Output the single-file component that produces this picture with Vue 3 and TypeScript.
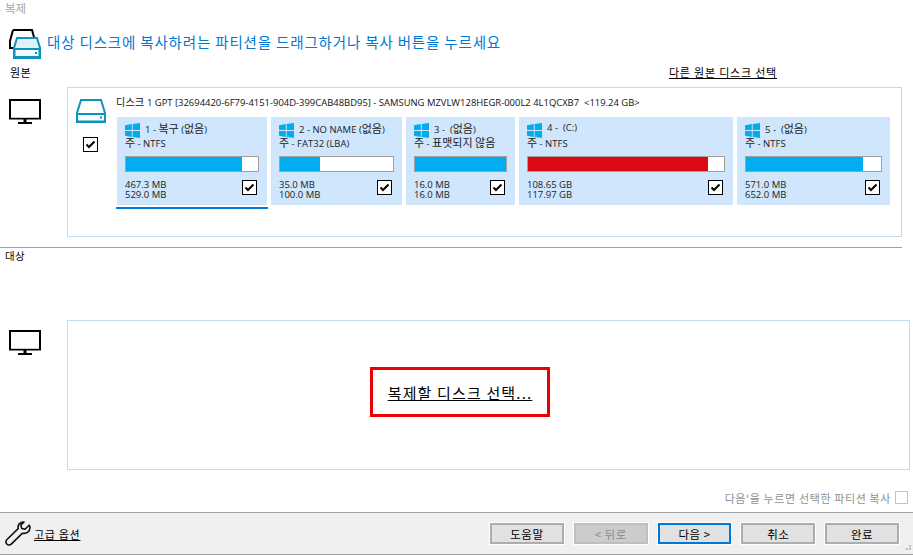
<script setup lang="ts">
interface Partition {
  name: string
  kind: string
  used: string
  total: string
  width: number
  fill: number
  color: string
  selected?: boolean
}

const partitions: Partition[] = [
  { name: '1 - 복구 (없음)', kind: '주 - NTFS', used: '467.3 MB', total: '529.0 MB', width: 150, fill: 88, color: '#00adef', selected: true },
  { name: '2 - NO NAME (없음)', kind: '주 - FAT32 (LBA)', used: '35.0 MB', total: '100.0 MB', width: 131, fill: 35, color: '#00adef' },
  { name: '3 -  (없음)', kind: '주 - 표맷되지 않음', used: '16.0 MB', total: '16.0 MB', width: 109, fill: 100, color: '#00adef' },
  { name: '4 -  (C:)', kind: '주 - NTFS', used: '108.65 GB', total: '117.97 GB', width: 214, fill: 92, color: '#dc0a14' },
  { name: '5 -  (없음)', kind: '주 - NTFS', used: '571.0 MB', total: '652.0 MB', width: 153, fill: 87, color: '#00adef' }
]
const buttons = ['도움말', '< 뒤로', '다음 >', '취소', '완료']

function segments(text: string): { t: string; ko: boolean }[] {
  return text
    .split(/([가-힣 ]*[가-힣]+)/)
    .filter((s) => s.length > 0)
    .map((t) => ({ t, ko: /[가-힣]/.test(t) }))
}
</script>

<template>
  <div class="app">
    <div class="title">복제</div>
    <div class="head">
      <svg class="head-icon" width="32" height="32" viewBox="0 0 32 32">
        <path d="M4 2H23L25.500 11M4 2L1 13V20H5" fill="none" stroke="#000" stroke-width="2" />
        <path d="M8 10H28L31 20V30H5V20Z" fill="#dff2fa" stroke="#0d93bd" stroke-width="2" />
        <path d="M5 20H31V31H5Z" fill="#0d93bd" />
        <rect x="6.500" y="22" width="23" height="6" fill="#f4fbfe" />
        <rect x="26" y="24" width="2" height="2" fill="#0d93bd" />
      </svg>
      <span class="heading">대상 디스크에 복사하려는 파티션을 드래그하거나 복사 버튼을 누르세요</span>
    </div>
    <div class="source-label">
      <span class="label">원본</span>
      <a class="link">다른 원본 디스크 선택</a>
    </div>
    <div class="row source">
      <svg class="monitor" width="32" height="25" viewBox="0 0 32 25">
        <rect x="1" y="1" width="30" height="18.500" fill="#fff" stroke="#000" stroke-width="2" />
        <path d="M2 18.500H30" stroke="#ccc" />
        <rect x="14.500" y="20" width="3" height="3" />
        <rect x="9" y="23" width="14" height="2" />
      </svg>
      <div class="box source-box">
        <div class="disk-col">
          <svg width="30" height="24" viewBox="0 0 30 24">
            <path d="M5 1H25L29 14V23H1V14Z" fill="#fff" stroke="#0d93bd" stroke-width="2" />
            <path d="M0 14H30V24H0Z" fill="#0d93bd" />
            <rect x="2" y="16" width="26" height="5.500" fill="#f4fbfe" />
            <rect x="24" y="17.500" width="2" height="2" fill="#0d93bd" />
          </svg>
          <span class="check"><svg width="11" height="9" viewBox="0 0 11 9"><path d="M1.500 4.500L4 7L9.500 1.500" fill="none" stroke="#000" stroke-width="2" /></svg></span>
        </div>
        <div class="disk-main">
          <div class="disk-title"><span class="ko-title">디스크</span> 1 GPT [32694420-6F79-4151-904D-399CAB48BD95] - SAMSUNG MZVLW128HEGR-000L2 4L1QCXB7&nbsp; &lt;119.24 GB&gt;</div>
          <div class="parts">
            <div v-for="p in partitions" :key="p.name" class="part" :class="{ selected: p.selected }" :style="{ width: p.width + 'px' }">
              <div class="part-name">
                <svg width="15" height="15" viewBox="0 0 15 15"><path d="M0 2.200L6.800 1.100V7.100H0ZM7.700 1L15 0V7.100H7.700ZM0 7.900H6.800V13.900L0 12.800ZM7.700 7.900H15V15L7.700 14Z" fill="#00adef" /></svg>
                <span class="name-text"><span v-for="(s, i) in segments(p.name)" :key="i" :class="{ ko: s.ko }">{{ s.t }}</span></span>
              </div>
              <div class="part-kind"><span v-for="(s, i) in segments(p.kind)" :key="i" :class="{ ko: s.ko }">{{ s.t }}</span></div>
              <div class="bar"><div class="fill" :style="{ width: p.fill + '%', background: p.color }"></div></div>
              <div class="part-foot">
                <div class="sizes"><div>{{ p.used }}</div><div>{{ p.total }}</div></div>
                <span class="check"><svg width="11" height="9" viewBox="0 0 11 9"><path d="M1.500 4.500L4 7L9.500 1.500" fill="none" stroke="#000" stroke-width="2" /></svg></span>
              </div>
            </div>
          </div>
        </div>
      </div>
    </div>
    <div class="rule"></div>
    <div class="label target-label">대상</div>
    <div class="row target">
      <svg class="monitor" width="32" height="25" viewBox="0 0 32 25">
        <rect x="1" y="1" width="30" height="18.500" fill="#fff" stroke="#000" stroke-width="2" />
        <path d="M2 18.500H30" stroke="#ccc" />
        <rect x="14.500" y="20" width="3" height="3" />
        <rect x="9" y="23" width="14" height="2" />
      </svg>
      <div class="box target-box">
        <div class="pick"><a class="pick-link">복제할 디스크 선택...</a></div>
      </div>
    </div>
    <div class="copy-opt">
      <span>다음'을 누르면 선택한 파티션 복사</span>
      <span class="copy-check"></span>
    </div>
    <div class="footer">
      <svg width="26" height="25" viewBox="0 0 26 25" class="wrench">
        <path d="M25 6.500C25 10.500 21.500 13.200 17.500 12.200L6.500 22.800C5 24.300 3 24.300 1.800 23C.5 21.700.6 19.800 2 18.500L13.200 7.700C12.200 4 15 .8 19 1L15.800 4.300L16.800 7.500L20 8.300L24.200 4.200C24.700 5 25 5.700 25 6.500Z" fill="none" stroke="#111" stroke-width="1.600" stroke-linejoin="round" />
      </svg>
      <a class="adv">고급 옵션</a>
      <div class="buttons">
        <button v-for="(b, i) in buttons" :key="b" class="btn" :class="{ disabled: i === 1, primary: i === 2 }" type="button">{{ b }}</button>
      </div>
      <svg class="grip" width="8" height="8" viewBox="0 0 8 8" fill="#bbb"><rect x="5" y="0" width="2" height="2"/><rect x="2" y="3" width="2" height="2"/><rect x="5" y="3" width="2" height="2"/></svg>
    </div>
  </div>
</template>

<style scoped>
.app {
  width: 913px;
  height: 555px;
  display: flex;
  flex-direction: column;
  overflow: hidden;
  background: #fff;
  font-family: "Noto Sans CJK KR", "Noto Sans", sans-serif;
  font-size: 11px;
  color: #000;
}
.title {
  height: 16px;
  line-height: 16px;
  padding-left: 5px;
  color: #a6a6a6;
  font-size: 11.500px;
}
.head {
  height: 48px;
  padding: 12px 0 0 9px;
  box-sizing: border-box;
  display: flex;
  align-items: flex-start;
}
.head-icon { flex: none; }
.heading {
  margin: 2px 0 0 6px;
  font-size: 14.500px;
  line-height: 24px;
  letter-spacing: 0.840px;
  color: #0078d7;
  white-space: nowrap;
}
.source-label {
  height: 23px;
  display: flex;
  justify-content: space-between;
  align-items: flex-start;
  padding: 0 136px 0 10px;
}
.label {
  line-height: 16px;
  font-size: 11px;
  letter-spacing: 0.300px;
}
.link {
  font-size: 11px;
  line-height: 16px;
  letter-spacing: 0.800px;
  text-decoration: underline;
}
.row {
  display: flex;
  align-items: flex-start;
  padding-left: 9px;
}
.monitor { flex: none; margin-right: 26px; }
.source { padding-right: 11px; }
.source .monitor { margin-top: 12px; }
.target { margin-top: 58px; padding-right: 3px; }
.target .monitor { margin-top: 10px; }
.box {
  flex: 1;
  height: 150px;
  box-sizing: border-box;
  border: 1px solid #bfdcf2;
}
.source-box {
  display: flex;
  padding: 8px 0 0 8px;
}
.disk-col {
  width: 41px;
  flex: none;
  display: flex;
  flex-direction: column;
  align-items: flex-start;
  padding-top: 3px;
}
.disk-col svg:first-child { display: block; }
.disk-col .check { margin: 14px 0 0 7px; }
.disk-main { flex: 1; min-width: 0; }
.disk-title {
  height: 21px;
  line-height: 12px;
  font-family: "Open Sans", "Noto Sans CJK KR", sans-serif;
  font-size: 9.450px;
  white-space: nowrap;
  color: #111;
  margin-left: -1px;
}
.ko-title { font-family: "Noto Sans CJK KR", sans-serif; font-size: 10px; letter-spacing: 0.300px; }
.parts { display: flex; gap: 4px; }
.part {
  height: 88px;
  background: #d0e6fc;
  box-sizing: border-box;
  padding: 6px 8px 0;
  position: relative;
  display: flex;
  flex-direction: column;
  font-family: "Open Sans", "Noto Sans CJK KR", sans-serif;
  font-size: 9.500px;
  color: #222;
}
.ko { font-family: "Noto Sans CJK KR", sans-serif; font-size: 11px; }
.part.selected::after {
  content: "";
  position: absolute;
  left: -1px;
  right: -1px;
  bottom: -4px;
  height: 2px;
  background: #0078d7;
}
.part-name {
  display: flex;
  align-items: flex-start;
  gap: 5px;
  height: 15px;
  white-space: pre;
}
.part-name svg { flex: none; }
.name-text { line-height: 10px; }
.part-kind { height: 18px; line-height: 9px; white-space: nowrap; }
.bar {
  height: 16px;
  box-sizing: border-box;
  border: 1px solid #a0a0a0;
  background: #fff;
}
.fill { height: 100%; }
.part-foot {
  display: flex;
  justify-content: space-between;
  align-items: flex-start;
  margin-top: 8px;
  padding-right: 2px;
}
.sizes { line-height: 10px; white-space: nowrap; }
.check {
  width: 15px;
  height: 15px;
  box-sizing: border-box;
  border: 1px solid #000;
  background: #fff;
  display: flex;
  align-items: center;
  justify-content: center;
}
.rule {
  height: 1px;
  width: 902px;
  margin-top: 10px;
  background: #a0a0a0;
}
.target-label { padding-left: 5px; font-size: 10.500px; height: 14px; }
.target-box { display: flex; align-items: flex-start; padding: 46px 0 0 302px; }
.pick {
  width: 180px;
  height: 50px;
  flex: none;
  box-sizing: border-box;
  border: 3px solid #ee0000;
  display: flex;
  align-items: center;
  justify-content: center;
}
.pick-link {
  font-size: 15px;
  letter-spacing: 1.150px;
  text-decoration: underline;
  white-space: nowrap;
}
.copy-opt {
  display: flex;
  justify-content: flex-end;
  align-items: center;
  gap: 4px;
  margin-top: 20px;
  height: 15px;
  padding-right: 5px;
  color: #909090;
  font-size: 11px;
  letter-spacing: 0.620px;
}
.copy-check {
  width: 13px;
  height: 13px;
  box-sizing: border-box;
  border: 1px solid #c4c4c4;
}
.footer {
  margin-top: auto;
  height: 43px;
  box-sizing: border-box;
  border-top: 1px solid #a0a0a0;
  border-bottom: 1px solid #a0a0a0;
  background: #f0f0f0;
  display: flex;
  align-items: center;
  position: relative;
  padding-left: 5px;
}
.wrench { flex: none; }
.adv {
  margin-left: 3px;
  font-size: 11px;
  letter-spacing: 0.700px;
  text-decoration: underline;
}
.buttons {
  margin-left: auto;
  margin-right: 14px;
  display: flex;
  gap: 10px;
}
.btn {
  width: 73.800px;
  height: 21px;
  padding: 0;
  box-sizing: border-box;
  border: 2px solid #adadad;
  outline: 1px solid #fff;
  background: #e1e1e1;
  font: inherit;
  font-size: 11.500px;
  letter-spacing: 0.500px;
  color: #000;
}
.btn.disabled { background: #cccccc; color: #8a8a8a; border-color: #bfbfbf; }
.btn.primary { border: 2px solid #0078d7; }
.grip { position: absolute; right: 1px; bottom: 1px; }
</style>
